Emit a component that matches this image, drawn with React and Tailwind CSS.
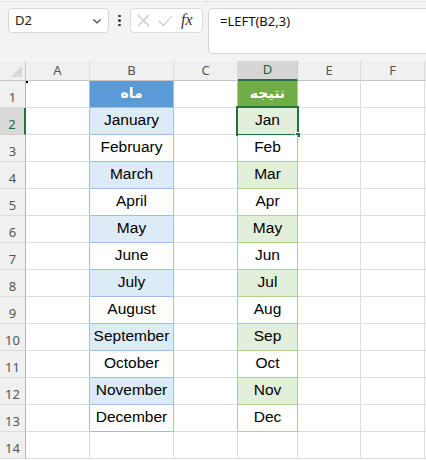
import React from 'react'

const months = ['January', 'February', 'March', 'April', 'May', 'June', 'July', 'August', 'September', 'October', 'November', 'December']
const cols = ['A', 'B', 'C', 'D', 'E', 'F']

const cellFont = { fontFamily: '"Liberation Sans", Arial, sans-serif' }
const uiFont = { fontFamily: '"Noto Sans", "Open Sans", sans-serif' }

const Cell = ({ className = '', children, style }) => (
    <div className={`h-[27px] border-r border-b flex items-center justify-center pb-[2px] text-[15.5px] text-black ${className}`} style={style || cellFont}>
        {children}
    </div>
)

const App = () => {
    const rows = Array.from({ length: 14 }, (_, i) => i + 1)

    return (
        <div className="w-[426px] h-[461px] overflow-hidden bg-white">
            {/* formula bar area */}
            <div className="h-[61px] bg-[#f3f3f3] relative" style={uiFont}>
                <div className="h-[2px] flex">
                    <div className="w-[207px] border-b border-[#e3e3e3] bg-[#f8f8f8]"></div>
                    <div className="w-px bg-[#d8d8d8]"></div>
                    <div className="flex-1 border-b border-[#e3e3e3] bg-[#f8f8f8]"></div>
                </div>
                <div className="flex items-start pt-[6px] pl-[8px]">
                    <div className="w-[101px] h-[25px] bg-white border border-[#d6d6d6] rounded-[4px] flex items-center justify-between pl-[6px] pr-[6px] text-[13px] text-[#222]">
                        <span>D2</span>
                        <svg width="10" height="10" viewBox="0 0 10 10" fill="none" stroke="#444" strokeWidth="1.2"><path d="M1.5 3.5 L5 7 L8.5 3.5" /></svg>
                    </div>
                    <div className="w-[21px] h-[25px] flex flex-col items-center justify-center gap-[2px]">
                        <span className="w-[2.5px] h-[2.5px] bg-[#333] rounded-full"></span>
                        <span className="w-[2.5px] h-[2.5px] bg-[#333] rounded-full"></span>
                        <span className="w-[2.5px] h-[2.5px] bg-[#333] rounded-full"></span>
                    </div>
                    <div className="w-[73px] h-[25px] bg-white border border-[#dcdcdc] rounded-[4px] flex items-center pl-[6px] gap-[8px]">
                        <svg width="13" height="13" viewBox="0 0 13 13" stroke="#c4c4c4" strokeWidth="1.1"><path d="M1 1 L12 12 M12 1 L1 12" /></svg>
                        <svg width="15" height="13" viewBox="0 0 15 13" fill="none" stroke="#c4c4c4" strokeWidth="1.1"><path d="M1 7 L5.5 11.5 L14 2" /></svg>
                        <span className="text-[16px] italic text-[#333] leading-none -mt-[2px]" style={{ fontFamily: '"Liberation Serif", serif' }}>fx</span>
                    </div>
                    <div className="ml-[5px] flex-1 h-[46px] bg-white border border-r-0 border-[#d4d4d4] rounded-l-[5px] pl-[11px] pt-[3px] text-[13px] text-[#111]">
                        =LEFT(B2,3)
                    </div>
                </div>
            </div>

            {/* grid */}
            <div className="grid grid-cols-[26px_64px_84px_64px_60px_63px_64px_1fr]">
                {/* column headers */}
                <div className="h-[20px] bg-[#f0f0f0] border-r border-b border-[#c6c6c6] relative">
                    <svg className="absolute right-[3px] bottom-[3px]" width="11" height="11" viewBox="0 0 11 11"><path d="M11 0 L11 11 L0 11 Z" fill="#d8d8d8" /></svg>
                </div>
                {cols.map((c) => (
                    <div
                        key={c}
                        className={`h-[20px] flex items-center justify-center text-[13px] border-r ${c === 'D' ? 'bg-[#d6d6d6] border-b-2 border-b-[#217346] text-[#1e5f3a] border-r-[#c8c8c8]' : 'bg-[#f0f0f0] border-b border-b-[#c6c6c6] text-[#555] border-r-[#dcdcdc]'}`}
                        style={uiFont}
                    >
                        {c}
                    </div>
                ))}
                <div className="h-[20px] bg-[#f0f0f0] border-b border-[#c6c6c6]"></div>

                {rows.map((r) => {
                    const inData = r <= 13
                    const band = r >= 2 && r <= 13 && r % 2 === 0
                    const active = r === 2
                    return (
                        <React.Fragment key={r}>
                            <div
                                className={`h-[27px] flex items-end justify-center pb-[0px] text-[13px] border-b ${active ? 'bg-[#d9d9d9] text-[#1e6b3d] border-r-2 border-r-[#217346] border-b-[#d0d0d0]' : 'bg-[#f0f0f0] text-[#555] border-r border-r-[#b5b5b5] border-b-[#dcdcdc]'}`}
                                style={uiFont}
                            >
                                {r}
                            </div>
                            {/* A */}
                            <Cell className={`border-b-[#dedede] ${inData ? 'border-r-[#9bc2e6]' : 'border-r-[#dedede]'} relative`}>
                                {r === 1 && <span className="absolute left-0 top-0 w-[2px] h-[2px] bg-black"></span>}
                            </Cell>
                            {/* B */}
                            {r === 1 ? (
                                <Cell className="bg-[#5b9bd5] border-r-[#9bc2e6] border-b-[#9bc2e6] text-white font-bold" style={{ fontFamily: '"DejaVu Sans", sans-serif' }}>
                                    <span className="text-[14px] text-white">ماه</span>
                                </Cell>
                            ) : inData ? (
                                <Cell className={`${band ? 'bg-[#ddebf7]' : 'bg-white'} border-r-[#9bc2e6] border-b-[#9bc2e6]`}>{months[r - 2]}</Cell>
                            ) : (
                                <Cell className="border-r-[#dedede] border-b-[#dedede]" />
                            )}
                            {/* C */}
                            <Cell className={`border-b-[#dedede] ${inData ? 'border-r-[#a9d08e]' : 'border-r-[#dedede]'}`} />
                            {/* D */}
                            {r === 1 ? (
                                <Cell className="bg-[#70ad47] border-r-[#a9d08e] border-b-[#a9d08e] font-bold" style={{ fontFamily: '"DejaVu Sans", sans-serif' }}>
                                    <span className="text-[14px] text-white">نتیجه</span>
                                </Cell>
                            ) : inData ? (
                                <Cell className={`${band ? 'bg-[#e2efda]' : 'bg-white'} border-r-[#a9d08e] border-b-[#a9d08e] relative`}>
                                    {months[r - 2].slice(0, 3)}
                                    {active && (
                                        <>
                                            <span className="absolute -left-[2px] -top-[2px] -right-[2px] -bottom-[2px] border-2 border-[#217346]"></span>
                                            <span className="absolute -right-[4px] -bottom-[4px] w-[6px] h-[6px] bg-[#217346] border border-white"></span>
                                        </>
                                    )}
                                </Cell>
                            ) : (
                                <Cell className="border-r-[#dedede] border-b-[#dedede]" />
                            )}
                            {/* E, F */}
                            <Cell className="border-r-[#dedede] border-b-[#dedede]" />
                            <Cell className="border-r-[#dedede] border-b-[#dedede]" />
                            <div className="h-[27px] border-b border-[#dedede]"></div>
                        </React.Fragment>
                    )
                })}
            </div>
        </div>
    )
}

export default App
